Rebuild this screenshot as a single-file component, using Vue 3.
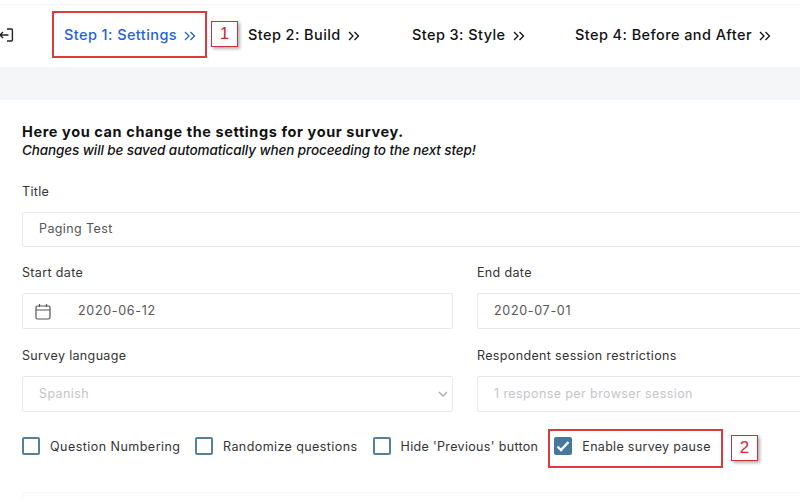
<template>
  <div class="page">
    <nav class="steps">
      <svg class="exit" width="15" height="16" viewBox="0 0 15 16" fill="none" stroke="#222" stroke-width="1.4">
        <path d="M8 2h4.400a1 1 0 0 1 1 1v10a1 1 0 0 1-1 1H8" stroke-linejoin="round" />
        <path d="M9.500 8H1M4 5 1 8l3 3" />
      </svg>
      <a v-for="s in steps" :key="s.label" class="step" :class="{ active: s.active }" :style="{ width: s.width + 'px' }">
        <span>{{ s.label }}</span>
        <svg class="chevrons" width="12" height="10" viewBox="0 0 12 10" fill="none" stroke="currentColor" stroke-width="1.300">
          <path d="M1 1l4 4-4 4M6.500 1l4 4-4 4" />
        </svg>
      </a>
    </nav>
    <div class="band"></div>
    <main class="form">
      <h1>Here you can change the settings for your survey.</h1>
      <p class="note">Changes will be saved automatically when proceeding to the next step!</p>

      <div class="field title-field">
        <label>Title</label>
        <div class="input short"><span>Paging Test</span></div>
      </div>

      <div class="row dates">
        <div class="field">
          <label>Start date</label>
          <div class="input date">
            <svg width="16" height="17" viewBox="0 0 16 17" fill="none" stroke="#555" stroke-width="1.200">
              <rect x="1" y="3" width="14" height="13" rx="1.500" />
              <path d="M1 7h14M4.500 1v3M11.500 1v3" />
            </svg>
            <span class="digits">2020-06-12</span>
          </div>
        </div>
        <div class="field">
          <label>End date</label>
          <div class="input"><span class="digits">2020-07-01</span></div>
        </div>
      </div>

      <div class="row selects">
        <div class="field">
          <label>Survey language</label>
          <div class="input disabled">
            <span>Spanish</span>
            <svg class="chev" width="10" height="6" viewBox="0 0 10 6" fill="none" stroke="#aaa" stroke-width="1.400">
              <path d="M1 1l4 4 4-4" />
            </svg>
          </div>
        </div>
        <div class="field">
          <label>Respondent session restrictions</label>
          <div class="input disabled"><span>1 response per browser session</span></div>
        </div>
      </div>

      <div class="checks">
        <label v-for="c in checks" :key="c.label" class="check" :style="{ marginRight: c.gap + 'px', letterSpacing: c.spacing + 'px' }">
          <span class="box" :class="{ on: c.on }">
            <svg v-if="c.on" width="14" height="12" viewBox="0 0 14 12" fill="none" stroke="#fff" stroke-width="2.400">
              <path d="M1.500 6.500 5 10l7.500-8" />
            </svg>
          </span>
          <span class="check-text">{{ c.label }}</span>
        </label>
      </div>
      <div class="next-card"></div>
    </main>

    <div class="mark box1"></div>
    <div class="tag tag1">1</div>
    <div class="mark box2"></div>
    <div class="tag tag2">2</div>
  </div>
</template>

<script setup>
const steps = [
  { label: 'Step 1: Settings', active: true, width: 184 },
  { label: 'Step 2: Build', width: 164 },
  { label: 'Step 3: Style', width: 163 },
  { label: 'Step 4: Before and After', width: 210 }
]
const checks = [
  { label: 'Question Numbering', gap: 14.5, spacing: 0.47 },
  { label: 'Randomize questions', gap: 15, spacing: 0.42 },
  { label: "Hide 'Previous' button", gap: 16, spacing: 0.33 },
  { label: 'Enable survey pause', gap: 0, spacing: 0.3, on: true }
]
</script>

<style>
html, body { margin: 0; background: #fff; overflow: hidden; }
</style>

<style scoped>
.page {
  position: relative;
  width: 800px;
  height: 499px;
  overflow: hidden;
  background: #fff;
  font-family: Inter, "Liberation Sans", sans-serif;
  color: #222;
}
.steps {
  box-sizing: border-box;
  display: flex;
  align-items: center;
  border-top: 1px solid #f3f4f6;
  margin-top: 4px;
  height: 63px;
  padding-bottom: 4px;
}
.exit { margin: 2px 50px 0 -1px; width: 15px; flex: none; }
.step {
  display: flex;
  align-items: center;
  gap: 7px;
  flex: none;
  font-size: 14.500px;
  font-weight: 500;
  letter-spacing: .42px;
  color: #111;
  white-space: nowrap;
}
.chevrons { margin-top: 4px; }
.step.active { color: #1f65d6; }
.band { height: 33px; background: #f5f6f8; }
.form { padding: 23px 0 0 22px; }
h1 { margin: 0; font-size: 14.500px; line-height: 17px; font-weight: 700; color: #111; letter-spacing: .6px; }
.note { margin: 2px 0 0; font-size: 13.500px; line-height: 17px; font-style: italic; font-weight: 500; color: #111; letter-spacing: -.1px; }
.field label {
  display: block;
  font-size: 12.500px;
  line-height: 16px;
  margin-bottom: 12px;
  letter-spacing: .35px;
  color: #333;
}
.title-field { margin-top: 25px; width: 800px; }
.input {
  box-sizing: border-box;
  height: 36px;
  display: flex;
  align-items: center;
  padding: 0 0 2px 16px;
  border: 1px solid #e8e9ec;
  border-radius: 2px;
  font-size: 12.500px;
  letter-spacing: .4px;
  color: #555;
}
.short { height: 35px; }
.digits { letter-spacing: .7px; }
.row { display: grid; grid-template-columns: 431px 431px; column-gap: 24px; }
.dates { margin-top: 18px; }
.selects { margin-top: 19px; }
.date { padding-left: 12px; gap: 27px; }
.date svg { margin-top: 2px; }
.disabled { color: #c4c5c8; justify-content: space-between; padding-right: 4px; }
.chev { margin-top: 2px; }
.checks { display: flex; margin-top: 25px; align-items: center; }
.check { display: flex; align-items: center; gap: 10px; font-size: 12.500px; color: #333; white-space: nowrap; }
.check-text { padding-top: 1px; }
.box {
  box-sizing: border-box;
  width: 18px;
  height: 18px;
  border: 2px solid #557f9c;
  border-radius: 2px;
  display: flex;
  align-items: center;
  justify-content: center;
  flex: none;
}
.box.on { background: #46789c; border-color: #46789c; }
.next-card { margin-top: 37px; height: 40px; border-top: 1px solid #f3f4f6; border-left: 1px solid #f3f4f6; }
.mark { position: absolute; box-sizing: border-box; border: 2px solid #dc3c40; }
.box1 { left: 52px; top: 11px; width: 155px; height: 47px; }
.box2 { left: 548px; top: 429px; width: 175px; height: 39px; }
.tag {
  position: absolute;
  box-sizing: border-box;
  width: 27px;
  height: 26px;
  border: 1px solid #c8323a;
  box-shadow: 2px 2px 3px rgba(0,0,0,.3);
  background: #fff;
  color: #d4262e;
  font-size: 17px;
  line-height: 24px;
  text-align: center;
  font-family: "Liberation Sans", sans-serif;
}
.tag1 { left: 211px; top: 21px; }
.tag2 { left: 731px; top: 435px; }
</style>
